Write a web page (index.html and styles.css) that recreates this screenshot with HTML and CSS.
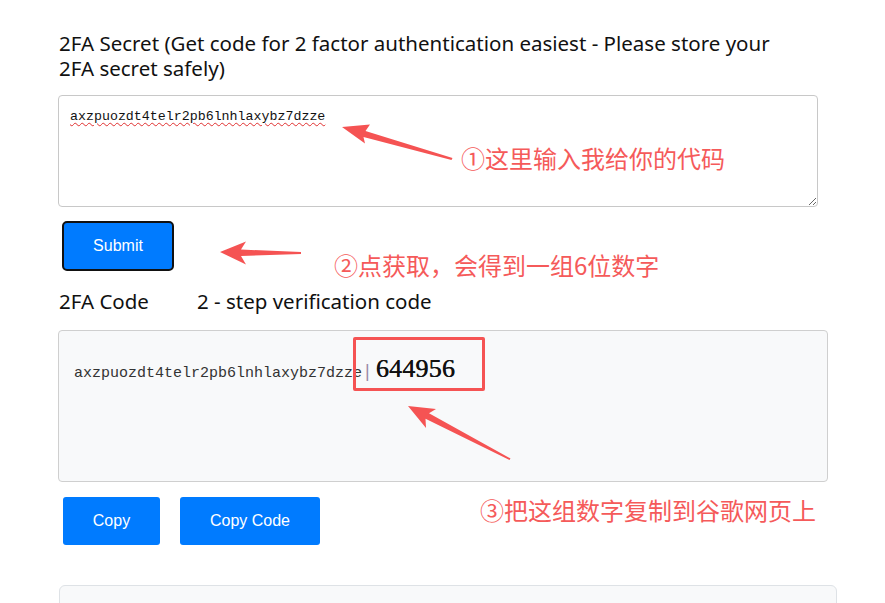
FILE: index.html
```html
<!DOCTYPE html>
<html lang="zh">
<head>
<meta charset="utf-8">
<title>2FA</title>
<link rel="stylesheet" href="styles.css">
</head>
<body>
<main class="page">
  <p class="label">2FA Secret (Get code for 2 factor authentication easiest - Please store your 2FA secret safely)</p>
  <div class="secret-input"><span class="misspelled">axzpuozdt4telr2pb6lnhlaxybz7dzze</span></div>
  <button class="btn btn-submit">Submit</button>
  <p class="label code-label"><span>2FA Code</span><span>2 - step verification code</span></p>
  <div class="code-box">
    <span class="secret">axzpuozdt4telr2pb6lnhlaxybz7dzze</span><span class="sep">|</span><span class="otp">644956</span>
  </div>
  <div class="actions">
    <button class="btn btn-copy">Copy</button>
    <button class="btn btn-copy-code">Copy Code</button>
  </div>
  <div class="bottom-box"></div>

  <div class="note note1">①这里输入我给你的代码</div>
  <div class="note note2">②点获取，会得到一组6位数字</div>
  <div class="note note3">③把这组数字复制到谷歌网页上</div>
  <div class="highlight"></div>
  <svg class="arrows" width="885" height="603" viewBox="0 0 885 603">
    <polygon points="342,127 370,124.5 365.5,131 452.5,158 451.5,160 363.5,137 365,143.5" />
    <polygon points="220,252 246,241.5 241,249.5 301,252 301,254 241,256 246,264.5" />
    <polygon points="408,406 436,409 429,413.3 510.5,458.5 509.5,460 425.5,418.7 426,428" />
  </svg>
</main>
</body>
</html>
```

FILE: styles.css
```css
html, body {
  margin: 0;
  padding: 0;
  background: #ffffff;
}

.page {
  position: relative;
  width: 885px;
  height: 603px;
  overflow: hidden;
  box-sizing: border-box;
  padding: 31px 0 0 58px;
  font-family: "Noto Sans", "Noto Sans CJK SC", sans-serif;
  color: #111;
}

.label {
  margin: 0;
  width: 722px;
  font-size: 20.5px;
  line-height: 25px;
  padding-left: 1px;
}

.secret-input {
  margin-top: 14px;
  width: 760px;
  height: 112px;
  box-sizing: border-box;
  border: 1px solid #c8c8c8;
  border-radius: 4px;
  padding: 12px 11px;
  resize: both;
  overflow: hidden;
  font-family: "Liberation Mono", monospace;
  font-size: 13.3px;
  line-height: 17px;
  color: #111;
}

.misspelled {
  text-decoration: underline wavy #e03030;
  text-decoration-thickness: 1px;
  text-underline-offset: 2px;
}

.btn {
  font-family: "Liberation Sans", Arial, sans-serif;
  font-size: 16px;
  color: #fff;
  background: #007bff;
  border: none;
  cursor: pointer;
  padding: 0;
}

.btn-submit {
  display: block;
  margin: 14px 0 0 4px;
  width: 112px;
  height: 50px;
  border: 2px solid #111;
  border-radius: 5px;
}

.code-label {
  margin-top: 18px;
  display: flex;
  width: auto;
}

.code-label span:first-child {
  width: 138px;
}

.code-box {
  margin-top: 16px;
  width: 770px;
  height: 152px;
  box-sizing: border-box;
  background: #f8f9fa;
  border: 1px solid #cfcfcf;
  border-radius: 4px;
  padding: 23px 0 0 15px;
  display: flex;
  align-items: baseline;
}

.secret {
  font-family: "Liberation Mono", monospace;
  font-size: 15px;
  color: #333;
}

.sep {
  font-family: "Liberation Sans", sans-serif;
  font-size: 18px;
  color: #9b8aa8;
  margin: 0 6px 0 3px;
}

.otp {
  font-family: "Liberation Serif", "Times New Roman", serif;
  font-size: 26px;
  font-weight: 400;
  color: #111;
  text-shadow: 0.4px 0 0 #111;
  letter-spacing: 0.2px;
}

.actions {
  display: flex;
  gap: 20px;
  margin: 15px 0 0 5px;
}

.btn-copy,
.btn-copy-code {
  height: 48px;
  border-radius: 3px;
}

.btn-copy {
  width: 97px;
}

.btn-copy-code {
  width: 140px;
}

.bottom-box {
  margin: 40px 0 0 1px;
  width: 778px;
  height: 60px;
  box-sizing: border-box;
  background: #f8f9fa;
  border: 1px solid #dee2e6;
  border-radius: 6px;
}

.note {
  position: absolute;
  font-family: "Noto Sans CJK SC", sans-serif;
  font-size: 24px;
  line-height: 28px;
  color: #f55a5a;
  white-space: nowrap;
}

.note1 { left: 461px; top: 144px; }
.note2 { left: 334px; top: 251px; }
.note3 { left: 480px; top: 496px; }

.highlight {
  position: absolute;
  left: 353px;
  top: 337px;
  width: 132px;
  height: 54px;
  box-sizing: border-box;
  border: 3px solid #f55353;
  border-radius: 2px;
}

.arrows {
  position: absolute;
  left: 0;
  top: 0;
  pointer-events: none;
}

.arrows polygon {
  fill: #f55353;
}
```
